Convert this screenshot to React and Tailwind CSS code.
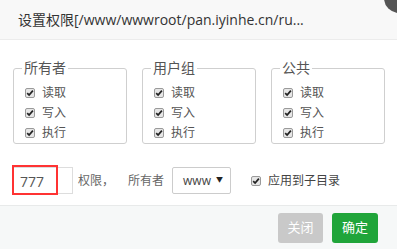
const font = { fontFamily: '"Open Sans", "Noto Sans CJK SC", sans-serif' }

const Check = ({ className = '' }) => (
  <span className={`inline-flex h-[10px] w-[10px] items-center justify-center rounded-[2px] border border-[#9a9a9a] bg-[#e6e6e6] ${className}`}>
    <svg width="8" height="8" viewBox="0 0 8 8">
      <path d="M1.2 4.2 L3.1 6.1 L6.9 1.6" fill="none" stroke="#222" strokeWidth="1.7" />
    </svg>
  </span>
)

const Group = ({ title }) => (
  <fieldset className="w-[114px] h-[84px] rounded-[3px] border border-[#cfcfcf] pl-[11px] pt-[7px]">
    <legend className="ml-[-3px] px-[2px] text-[14px] leading-[16px] text-[#555]">{title}</legend>
    {['读取', '写入', '执行'].map((t) => (
      <div key={t} className="flex h-[20px] items-center">
        <Check />
        <span className="ml-[7px] text-[12px] text-[#555]">{t}</span>
      </div>
    ))}
  </fieldset>
)

export default function App() {
  return (
    <div className="relative h-[249px] w-[397px] overflow-hidden bg-white" style={font}>
      <div className="flex h-[40px] items-center border-b border-[#ececec] bg-[#f8f8f8] pl-[18px] text-[14px] text-[#333]">
        设置权限[/www/wwwroot/pan.iyinhe.cn/ru...
      </div>
      <div className="absolute left-[384px] top-[-17px] h-[30px] w-[30px] rounded-full bg-[#555]">
        <div className="absolute left-[12px] top-[13px] h-[2px] w-[12px] rotate-[-45deg] bg-white" />
      </div>

      <div className="flex gap-[15px] pl-[13px] pt-[20px]">
        <Group title="所有者" />
        <Group title="用户组" />
        <Group title="公共" />
      </div>

      <div className="mt-[23px] flex h-[27px] items-center pl-[13px] text-[12px] text-[#666]">
        <div className="relative h-[27px] w-[60px] border border-[#ddd]">
          <span className="absolute left-[6px] top-[3px] text-[14px] text-[#555]">777</span>
          <div className="absolute left-[-2px] top-[-3px] h-[30px] w-[46px] border-2 border-[#f33]" />
        </div>
        <span className="ml-[5px]">权限，</span>
        <span className="ml-[14px]">所有者</span>
        <div className="ml-[8px] flex h-[27px] w-[59px] items-center justify-between rounded-[2px] border border-[#ccc] pl-[10px] pr-[7px]">
          <span className="text-[12px] text-[#444]">www</span>
          <span className="text-[7px] text-[#222]">▼</span>
        </div>
        <Check className="ml-[20px]" />
        <span className="ml-[7px] text-[#444]">应用到子目录</span>
      </div>

      <div className="absolute bottom-0 left-0 flex h-[44px] w-[397px] items-center justify-end gap-[9px] border-t border-[#e8eaea] bg-[#f6f8f8] pr-[19px]">
        <button className="h-[30px] w-[45px] rounded-[3px] bg-[#c9c9c9] text-[13px] text-white">关闭</button>
        <button className="h-[30px] w-[46px] rounded-[3px] bg-[#20a53a] text-[13px] text-white">确定</button>
      </div>
    </div>
  )
}
